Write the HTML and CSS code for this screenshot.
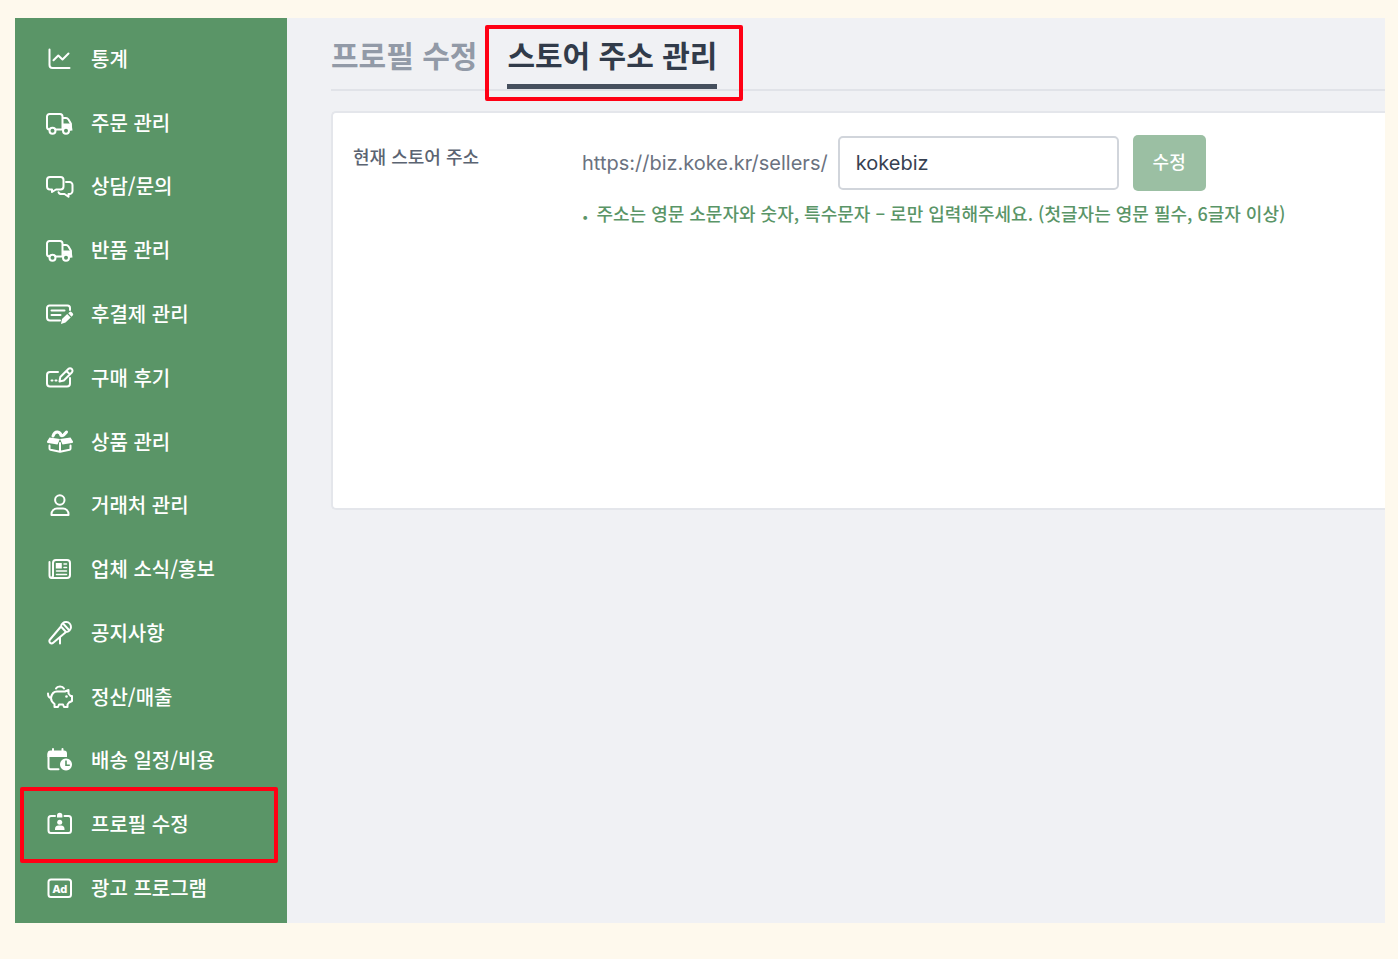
FILE: index.html
```
<!DOCTYPE html>
<html lang="ko">

<head>
  <meta charset="utf-8">
  <meta name="viewport" content="width=device-width, initial-scale=1">
  <title>스토어 주소 관리</title>
  <link rel="stylesheet" href="styles.css">
</head>

<body>
  <div class="app">
    <nav class="sidebar">
      <a class="menu-item" href="#">
        <svg class="icon" viewBox="0 0 28 28"><path d="M3.5 4.5v15.500a3 3 0 0 0 3 3H23.500M7.500 15.300l4.800-4.800 4.200 4 6-6"/></svg>
        통계
      </a>
      <a class="menu-item" href="#">
        <svg class="icon" viewBox="0 0 28 28"><path d="M3.300 20.500a2.500 2.500 0 0 1-2.300-2.500V7.500a2.500 2.500 0 0 1 2.500-2.500H14a2.500 2.500 0 0 1 2.500 2.500v13H9.500M16.500 9h3.500q1.500 0 2.500 1.500l2.300 4v6H23.500"/><path class="solid" d="M16.500 14.500H25.500L26.500 21.500H24q-1-3.500-4-3.500t-3.500 2z"/><circle cx="6.500" cy="21.700" r="3"/><circle cx="20" cy="21.700" r="3"/></svg>
        주문 관리
      </a>
      <a class="menu-item" href="#">
        <svg class="icon" viewBox="0 0 28 28"><path d="M4 5h10.500a3 3 0 0 1 3 3v6.500a3 3 0 0 1-3 3H10l-4 2.500v-2.500H4a3 3 0 0 1-3-3V8a3 3 0 0 1 3-3zM20 10h3.500a3 3 0 0 1 3 3v6a3 3 0 0 1-3 3h-1v2.800L18.500 22H15.500q-2.500 0-3-1.800"/></svg>
        상담/문의
      </a>
      <a class="menu-item" href="#">
        <svg class="icon" viewBox="0 0 28 28"><path d="M3.300 20.500a2.500 2.500 0 0 1-2.300-2.500V7.500a2.500 2.500 0 0 1 2.500-2.500H14a2.500 2.500 0 0 1 2.500 2.500v13H9.500M16.500 9h3.500q1.500 0 2.500 1.500l2.300 4v6H23.500"/><path class="solid" d="M16.500 14.500H25.500L26.500 21.500H24q-1-3.500-4-3.500t-3.500 2z"/><circle cx="6.500" cy="21.700" r="3"/><circle cx="20" cy="21.700" r="3"/></svg>
        반품 관리
      </a>
      <a class="menu-item" href="#">
        <svg class="icon" viewBox="0 0 28 28"><path d="M24 10V8a2.500 2.500 0 0 0-2.500-2.500H3.500A2.500 2.500 0 0 0 1 8v9.500a3 3 0 0 0 3 3h10M5.500 10.500h13M5.500 15h9"/><path class="solid" d="M15 24l1-5 5.200-5 3.500 3.500-5.200 5zM22.300 13.200l1-1a1.700 1.700 0 0 1 2.400 0l1 1a1.700 1.700 0 0 1 0 2.400l-1.200 1.200z"/></svg>
        후결제 관리
      </a>
      <a class="menu-item" href="#">
        <svg class="icon" viewBox="0 0 28 28"><path d="M12 8H4a3 3 0 0 0-3 3v8.500a3 3 0 0 0 3 3h17a3 3 0 0 0 3-3V14M13.500 17.500l.8-4.500 8-8a2.300 2.300 0 0 1 3.500 3.500l-8 8zM20.500 7l3 3"/><path d="M5.500 16.500h1M9.500 16.500h1"/></svg>
        구매 후기
      </a>
      <a class="menu-item" href="#">
        <svg class="icon" viewBox="0 0 28 28"><path class="solid" d="M3.500 9.500l10.500 1.500-2.500 5.500-9.500-1.500q-1.500-.5-1-1.500zM24.500 9.500l-10.500 1.500 2.500 5.500 9.500-1.500q1.500-.5 1-1.500z"/><path d="M3.500 17.500v3q0 1 1 1.300L14 23.800l9.500-2q1-.3 1-1.300v-3M14 15v8.500"/><path class="thick" d="M7 8q1.500-4.300 4.500-4t3.500 3.500q2 1 5.500-3.500"/></svg>
        상품 관리
      </a>
      <a class="menu-item" href="#">
        <svg class="icon" viewBox="0 0 28 28"><circle cx="13.800" cy="9" r="4.700"/><path d="M5.500 24v-1a5.500 5.500 0 0 1 5.500-5.500h6a5.500 5.500 0 0 1 5.500 5.500v1z"/></svg>
        거래처 관리
      </a>
      <a class="menu-item" href="#">
        <svg class="icon" viewBox="0 0 28 28"><path d="M3.500 7v13.500q0 2.500 2.500 2.500H21a3 3 0 0 0 3-3V8a3 3 0 0 0-3-3H10a3 3 0 0 0-3 3v12.500q0 2-2 2.500"/><path class="thin" d="M18 9h2.500M18 12.500h2.500M10.500 16h10M10.500 19.500h10"/><path class="solid" d="M9.800 8h6v5.500h-6z"/></svg>
        업체 소식/홍보
      </a>
      <a class="menu-item" href="#">
        <svg class="icon" viewBox="0 0 28 28"><path d="M15 7.500L4 20.500a2.200 2.200 0 0 0 3.200 3.200L20 13M15 7.500a5 5 0 1 1 5 5.500zM17.500 5l5.500 6M14 18v6.500"/></svg>
        공지사항
      </a>
      <a class="menu-item" href="#">
        <svg class="icon" viewBox="0 0 28 28"><path d="M11 8.500h8l3.500-1.500v3.500l2 2.500h1.500v5l-3 1.500-1.500 2V24h-3.500l-1-2.500h-4L12 24H8.500v-3q-3.500-2.500-3.500-6-3-.5-3-4.500M5 15q1-6.500 6-6.500M10 5.500q1-2 4-2t4 2"/><circle class="solid" cx="20.500" cy="13.500" r="1.300"/></svg>
        정산/매출
      </a>
      <a class="menu-item" href="#">
        <svg class="icon" viewBox="0 0 28 28"><path d="M12.500 23.300H4.500a2 2 0 0 1-2-2V8M7 3v4M16.500 3v4"/><path class="solid" d="M1.500 11V7.500a3 3 0 0 1 3-3h13.500a3 3 0 0 1 3 3V11z"/><path class="solid" fill-rule="evenodd" d="M20 12.500a6 6 0 1 0 .01 0zM19.200 14.500h1.600v4h3v1.500h-4.600z"/></svg>
        배송 일정/비용
      </a>
      <a class="menu-item active" href="#" aria-current="page">
        <svg class="icon" viewBox="0 0 28 28"><path d="M9 6H5a2.500 2.500 0 0 0-2.500 2.500v12A2.500 2.500 0 0 0 5 23h17.500a2.500 2.500 0 0 0 2.500-2.500v-12A2.500 2.500 0 0 0 22.500 6h-4"/><path class="solid" d="M11 7.500V5.500a2.700 2.700 0 0 1 5.400 0v2zM9 20v-1a3.500 3.500 0 0 1 3.500-3.500h2.500a3.500 3.500 0 0 1 3.500 3.500v1z"/><circle class="solid" cx="13.700" cy="12.200" r="2.500"/></svg>
        프로필 수정
      </a>
      <a class="menu-item" href="#">
        <svg class="icon" viewBox="0 0 28 28"><rect x="2.500" y="5.500" width="22.500" height="17.500" rx="2.500"/><text class="ad" x="13.700" y="18.500">Ad</text></svg>
        광고 프로그램
      </a>
    </nav>

    <main class="content">
      <div class="tabs">
        <a class="tab" href="#">프로필 수정</a>
        <a class="tab active" href="#" aria-current="page">스토어 주소 관리</a>
      </div>

      <form class="card">
        <label class="card-label" for="storeAddress">현재 스토어 주소</label>
        <div>
          <div class="address-row">
            <span class="address-prefix">https://biz.koke.kr/sellers/</span>
            <input class="address-input" type="text" id="storeAddress" name="storeAddress" value="kokebiz">
            <button class="save-button" type="button">수정</button>
          </div>
          <p class="hint"><span class="bullet">•</span>주소는 영문 소문자와 숫자, 특수문자 – 로만 입력해주세요. (첫글자는 영문 필수, 6글자 이상)</p>
        </div>
      </form>
    </main>
  </div>
</body>

</html>
```
FILE: styles.css
```
* {
  box-sizing: border-box;
}

body {
  margin: 0;
  padding: 18px 13px 36px 15px;
  min-height: 100vh;
  display: flex;
  background-color: #fef9ed;
  font-family: "Noto Sans CJK KR", sans-serif;
}

a {
  text-decoration: none;
}

.app {
  flex: 1;
  display: flex;
  background-color: #f0f1f4;
}

/* sidebar */

.sidebar {
  flex: none;
  width: 272px;
  padding: 9px 0 3px;
  display: flex;
  flex-direction: column;
  background-color: #5a9567;
}

.menu-item {
  position: relative;
  flex: 1;
  min-height: 48px;
  padding-left: 31px;
  display: flex;
  align-items: center;
  gap: 17px;
  color: white;
  font-size: 20px;
  font-weight: 500;
  line-height: 28px;
}

.icon {
  width: 28px;
  height: 28px;
  fill: none;
  stroke: white;
  stroke-width: 2;
  stroke-linecap: round;
  stroke-linejoin: round;
}

.icon .thin {
  stroke-width: 1.5;
}

.icon .thick {
  stroke-width: 3;
}

.icon .solid {
  fill: white;
  stroke: none;
}

.icon .ad {
  fill: white;
  stroke: none;
  font-family: Inter, sans-serif;
  font-size: 11px;
  font-weight: 800;
  text-anchor: middle;
}

/* red highlight frames */

.menu-item.active::after,
.tab.active::after {
  content: "";
  position: absolute;
  border: 4px solid #ff0014;
  border-radius: 2px;
  pointer-events: none;
}

.menu-item.active::after {
  inset: -5px 9px -7px 5px;
}

.tab.active::after {
  inset: -9px -26px -17px -22px;
}

/* content */

.content {
  flex: 1;
  min-width: 0;
  padding: 16px 0 0 44px;
}

.tabs {
  display: flex;
  gap: 30px;
  border-bottom: 2px solid #e1e3e8;
}

.tab {
  position: relative;
  padding-bottom: 10px;
  border-bottom: 5px solid transparent;
  color: #929aa7;
  font-size: 30px;
  font-weight: 700;
  line-height: 40px;
}

.tab.active {
  color: #313b4a;
  border-bottom-color: #454f5d;
}

.card {
  min-height: 399px;
  margin-top: 20px;
  padding: 22px 20px;
  display: grid;
  grid-template-columns: 229px 1fr;
  align-items: start;
  background-color: white;
  border: 2px solid #e4e6eb;
  border-right: none;
  border-radius: 5px 0 0 5px;
}

.card-label {
  padding-top: 8px;
  color: #5b6472;
  font-size: 18px;
  font-weight: 500;
  line-height: 26px;
}

.address-row {
  display: flex;
  align-items: center;
}

.address-prefix {
  color: #6b7280;
  font-family: Inter, sans-serif;
  font-size: 20px;
  line-height: 28px;
}

.address-input {
  width: 281px;
  height: 54px;
  margin: 0 14px 0 10px;
  padding: 0 16px;
  border: 2px solid #d1d5db;
  border-radius: 5px;
  background-color: white;
  color: #374151;
  font-family: Inter, sans-serif;
  font-size: 20px;
}

.save-button {
  width: 73px;
  height: 56px;
  padding: 0 0 4px;
  border: none;
  border-radius: 5px;
  background-color: #9bbfa3;
  color: white;
  font-family: inherit;
  font-size: 18px;
  font-weight: 500;
  cursor: pointer;
}

.hint {
  margin: 10px 0 0;
  color: #5a9567;
  font-size: 18px;
  font-weight: 500;
  line-height: 24px;
}

.bullet {
  margin-right: 8px;
  font-family: Inter, sans-serif;
  font-size: 12px;
}
```
